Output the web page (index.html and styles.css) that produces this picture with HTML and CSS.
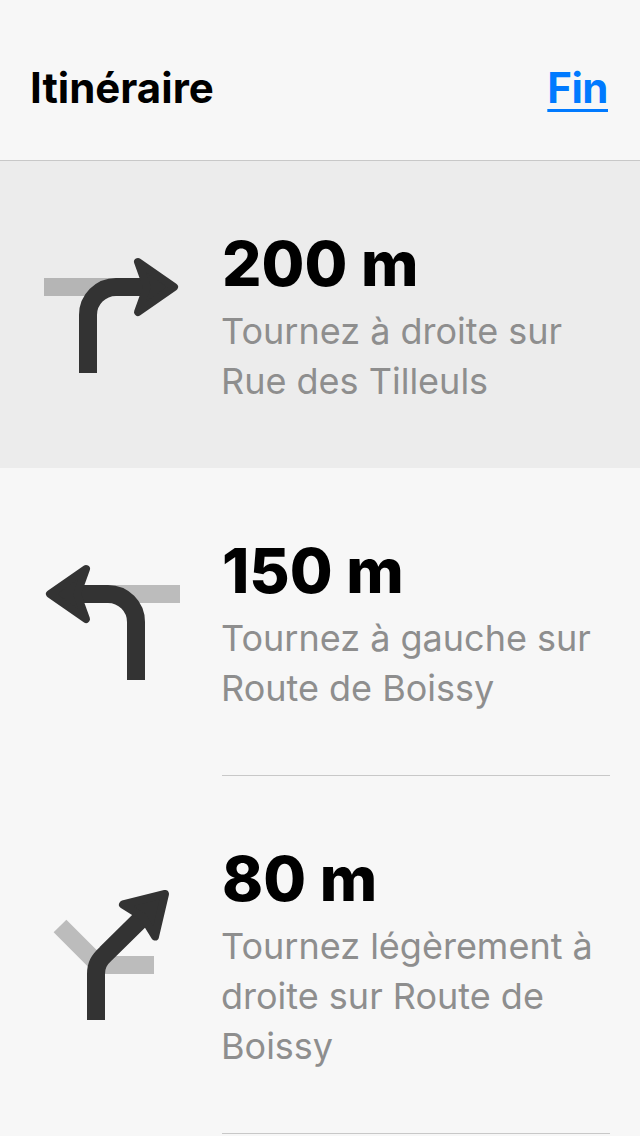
FILE: index.html
```html
<!DOCTYPE html>
<html>
<head>
  <meta charset="utf-8">
  <meta name="viewport" content="width=device-width, initial-scale=1">
  <title>Itinéraire</title>
  <link rel="stylesheet" href="styles.css">
</head>
<body>
  <header class="top-bar">
    <h1 class="top-title">Itinéraire</h1>
    <a class="top-link" href="#">Fin</a>
  </header>

  <div class="step step-current">
    <svg class="turn-icon" viewBox="0 0 136 116" width="136" height="116">
      <path class="road" d="M0 30H72"/>
      <path class="route" d="M44 116V58A28 28 0 0 1 72 30H104"/>
      <path class="head" d="M94 5L130 30L94 55L103 30Z"/>
    </svg>
    <div class="step-text">
      <div class="step-dist">200 m</div>
      <div class="step-desc">Tournez à droite sur<br>Rue des Tilleuls</div>
    </div>
  </div>

  <div class="step">
    <svg class="turn-icon flip" viewBox="0 0 136 116" width="136" height="116">
      <path class="road" d="M0 30H72"/>
      <path class="route" d="M44 116V58A28 28 0 0 1 72 30H104"/>
      <path class="head" d="M94 5L130 30L94 55L103 30Z"/>
    </svg>
    <div class="step-text">
      <div class="step-dist">150 m</div>
      <div class="step-desc">Tournez à gauche sur<br>Route de Boissy</div>
    </div>
  </div>

  <div class="step">
    <svg class="turn-icon" viewBox="0 0 136 132" width="136" height="132">
      <path class="road" d="M16 37L55 76H110"/>
      <path class="route" d="M52 131V85C52 76 55 71 62 64.500L100 27"/>
      <path class="head" d="M79 15.500L121 5L111 47.500L99 28Z"/>
    </svg>
    <div class="step-text">
      <div class="step-dist">80 m</div>
      <div class="step-desc">Tournez légèrement à<br>droite sur Route de<br>Boissy</div>
    </div>
  </div>
</body>
</html>
```

FILE: styles.css
```css
body {
  margin: 0;
  background: #f7f7f7;
  overflow: hidden;
  font-family: Inter, "Liberation Sans", sans-serif;
  color: #000;
}

.top-bar {
  display: flex;
  justify-content: space-between;
  align-items: center;
  box-sizing: border-box;
  height: 161px;
  padding: 16px 32px 0 30px;
  border-bottom: 1px solid #c8c8c8;
}

.top-title {
  margin: 0;
  font-size: 42px;
  font-weight: 700;
  line-height: 48px;
}

.top-link {
  font-size: 42px;
  font-weight: 700;
  line-height: 48px;
  letter-spacing: -0.5px;
  color: #007aff;
  text-decoration: underline;
  text-decoration-thickness: 3px;
  text-underline-offset: 6px;
}

.step {
  display: flex;
  padding-left: 44px;
}

.step-current {
  background: #ececec;
}

.turn-icon {
  flex: none;
  align-self: center;
  margin-right: 42px;
}

.flip {
  transform: scaleX(-1);
}

.road {
  fill: none;
  stroke: #bcbcbc;
  stroke-width: 18;
}

.step-current .road {
  stroke: #b5b5b5;
}

.route {
  fill: none;
  stroke: #333;
  stroke-width: 18;
}

.head {
  fill: #333;
  stroke: #333;
  stroke-width: 8;
  stroke-linejoin: round;
}

.step-text {
  flex: 1;
  margin-right: 30px;
  padding: 67px 0 62px;
  border-bottom: 1px solid #c8c8c8;
}

.step-current .step-text {
  border-bottom: 0;
}

.step-dist {
  font-size: 62px;
  font-weight: 800;
  line-height: 72px;
}

.step-desc {
  margin: 6px 0 0 -1px;
  font-size: 36px;
  line-height: 50px;
  color: #8e8e8e;
}
```
